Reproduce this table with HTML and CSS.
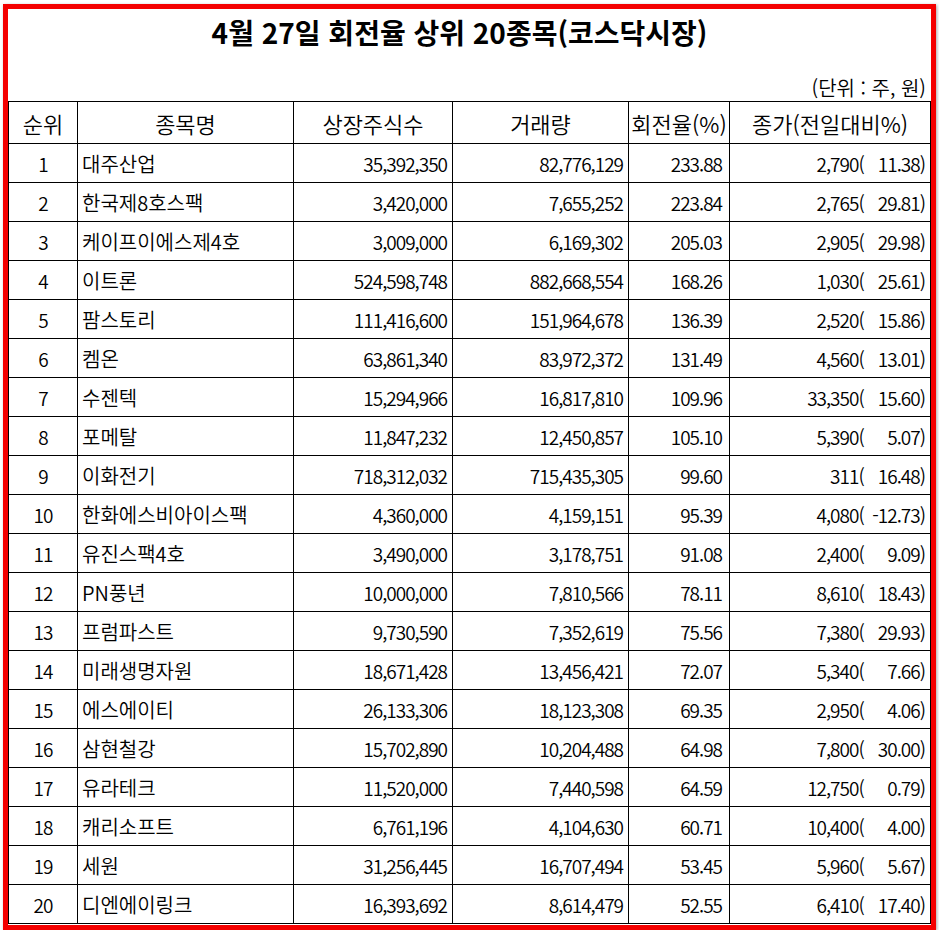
FILE: index.html
```html
<!DOCTYPE html>
<html lang="ko">
<head>
<meta charset="utf-8">
<title>4월 27일 회전율 상위 20종목(코스닥시장)</title>
<link rel="stylesheet" href="styles.css">
</head>
<body>
<div class="frame">
  <div class="title">4월 27일 회전율 상위 20종목(코스닥시장)</div>
  <div class="unit">(단위 : 주, 원)</div>
  <table class="grid">
    <colgroup>
      <col class="c-rank"><col class="c-name"><col class="c-shares"><col class="c-vol"><col class="c-rate"><col class="c-price">
    </colgroup>
    <thead>
      <tr><th>순위</th><th>종목명</th><th>상장주식수</th><th>거래량</th><th>회전율(%)</th><th>종가(전일대비%)</th></tr>
    </thead>
    <tbody>
      <tr><td class="rank">1</td><td class="name">대주산업</td><td class="num">35,392,350</td><td class="num">82,776,129</td><td class="num rate">233.88</td><td class="num"><span>2,790(</span><span class="pct">11.38</span><span>)</span></td></tr>
      <tr><td class="rank">2</td><td class="name">한국제8호스팩</td><td class="num">3,420,000</td><td class="num">7,655,252</td><td class="num rate">223.84</td><td class="num"><span>2,765(</span><span class="pct">29.81</span><span>)</span></td></tr>
      <tr><td class="rank">3</td><td class="name">케이프이에스제4호</td><td class="num">3,009,000</td><td class="num">6,169,302</td><td class="num rate">205.03</td><td class="num"><span>2,905(</span><span class="pct">29.98</span><span>)</span></td></tr>
      <tr><td class="rank">4</td><td class="name">이트론</td><td class="num">524,598,748</td><td class="num">882,668,554</td><td class="num rate">168.26</td><td class="num"><span>1,030(</span><span class="pct">25.61</span><span>)</span></td></tr>
      <tr><td class="rank">5</td><td class="name">팜스토리</td><td class="num">111,416,600</td><td class="num">151,964,678</td><td class="num rate">136.39</td><td class="num"><span>2,520(</span><span class="pct">15.86</span><span>)</span></td></tr>
      <tr><td class="rank">6</td><td class="name">켐온</td><td class="num">63,861,340</td><td class="num">83,972,372</td><td class="num rate">131.49</td><td class="num"><span>4,560(</span><span class="pct">13.01</span><span>)</span></td></tr>
      <tr><td class="rank">7</td><td class="name">수젠텍</td><td class="num">15,294,966</td><td class="num">16,817,810</td><td class="num rate">109.96</td><td class="num"><span>33,350(</span><span class="pct">15.60</span><span>)</span></td></tr>
      <tr><td class="rank">8</td><td class="name">포메탈</td><td class="num">11,847,232</td><td class="num">12,450,857</td><td class="num rate">105.10</td><td class="num"><span>5,390(</span><span class="pct">5.07</span><span>)</span></td></tr>
      <tr><td class="rank">9</td><td class="name">이화전기</td><td class="num">718,312,032</td><td class="num">715,435,305</td><td class="num rate">99.60</td><td class="num"><span>311(</span><span class="pct">16.48</span><span>)</span></td></tr>
      <tr><td class="rank">10</td><td class="name">한화에스비아이스팩</td><td class="num">4,360,000</td><td class="num">4,159,151</td><td class="num rate">95.39</td><td class="num"><span>4,080(</span><span class="pct">-12.73</span><span>)</span></td></tr>
      <tr><td class="rank">11</td><td class="name">유진스팩4호</td><td class="num">3,490,000</td><td class="num">3,178,751</td><td class="num rate">91.08</td><td class="num"><span>2,400(</span><span class="pct">9.09</span><span>)</span></td></tr>
      <tr><td class="rank">12</td><td class="name">PN풍년</td><td class="num">10,000,000</td><td class="num">7,810,566</td><td class="num rate">78.11</td><td class="num"><span>8,610(</span><span class="pct">18.43</span><span>)</span></td></tr>
      <tr><td class="rank">13</td><td class="name">프럼파스트</td><td class="num">9,730,590</td><td class="num">7,352,619</td><td class="num rate">75.56</td><td class="num"><span>7,380(</span><span class="pct">29.93</span><span>)</span></td></tr>
      <tr><td class="rank">14</td><td class="name">미래생명자원</td><td class="num">18,671,428</td><td class="num">13,456,421</td><td class="num rate">72.07</td><td class="num"><span>5,340(</span><span class="pct">7.66</span><span>)</span></td></tr>
      <tr><td class="rank">15</td><td class="name">에스에이티</td><td class="num">26,133,306</td><td class="num">18,123,308</td><td class="num rate">69.35</td><td class="num"><span>2,950(</span><span class="pct">4.06</span><span>)</span></td></tr>
      <tr><td class="rank">16</td><td class="name">삼현철강</td><td class="num">15,702,890</td><td class="num">10,204,488</td><td class="num rate">64.98</td><td class="num"><span>7,800(</span><span class="pct">30.00</span><span>)</span></td></tr>
      <tr><td class="rank">17</td><td class="name">유라테크</td><td class="num">11,520,000</td><td class="num">7,440,598</td><td class="num rate">64.59</td><td class="num"><span>12,750(</span><span class="pct">0.79</span><span>)</span></td></tr>
      <tr><td class="rank">18</td><td class="name">캐리소프트</td><td class="num">6,761,196</td><td class="num">4,104,630</td><td class="num rate">60.71</td><td class="num"><span>10,400(</span><span class="pct">4.00</span><span>)</span></td></tr>
      <tr><td class="rank">19</td><td class="name">세원</td><td class="num">31,256,445</td><td class="num">16,707,494</td><td class="num rate">53.45</td><td class="num"><span>5,960(</span><span class="pct">5.67</span><span>)</span></td></tr>
      <tr><td class="rank">20</td><td class="name">디엔에이링크</td><td class="num">16,393,692</td><td class="num">8,614,479</td><td class="num rate">52.55</td><td class="num"><span>6,410(</span><span class="pct">17.40</span><span>)</span></td></tr>
    </tbody>
  </table>
</div>
</body>
</html>
```

FILE: styles.css
```css
html, body {
  margin: 0;
  padding: 0;
  background: #fff;
}
body {
  font-family: "Noto Sans CJK KR", "Noto Sans", sans-serif;
  color: #000;
}
.frame {
  margin: 4px 0 0 3px;
  width: 923px;
  height: 916px;
  border: 5px solid #f40000;
  box-shadow: 1px 1px 3px rgba(0,0,0,0.35);
}
.title {
  height: 46px;
  line-height: 46px;
  text-align: center;
  font-size: 28px;
  font-weight: bold;
  padding-right: 20px;
}
.unit {
  height: 26px;
  line-height: 26px;
  padding-top: 20px;
  padding-right: 5px;
  text-align: right;
  font-size: 20px;
  font-weight: 350;
}
.grid {
  border-collapse: collapse;
  table-layout: fixed;
  width: 922px;
  font-size: 20px;
  font-weight: 350;
}
.c-rank { width: 69px; }
.c-name { width: 216px; }
.c-shares { width: 159px; }
.c-vol { width: 176px; }
.c-rate { width: 101px; }
.c-price { width: 201px; }
.grid th, .grid td {
  border: 1px solid #000;
  padding: 0;
  white-space: nowrap;
  overflow: hidden;
}
.grid th {
  height: 41px;
  font-weight: 350;
  font-size: 22px;
  text-align: center;
}
.grid td {
  height: 38px;
}
.rank {
  text-align: center;
  font-size: 19px;
  letter-spacing: -1px;
}
.name {
  text-align: left;
  padding-left: 4px !important;
}
.num {
  text-align: right;
  padding-right: 5px !important;
  font-size: 19px;
  letter-spacing: -1px;
}
.rate { padding-right: 7px !important; }
.pct {
  display: inline-block;
  width: 56px;
  text-align: right;
}
```
